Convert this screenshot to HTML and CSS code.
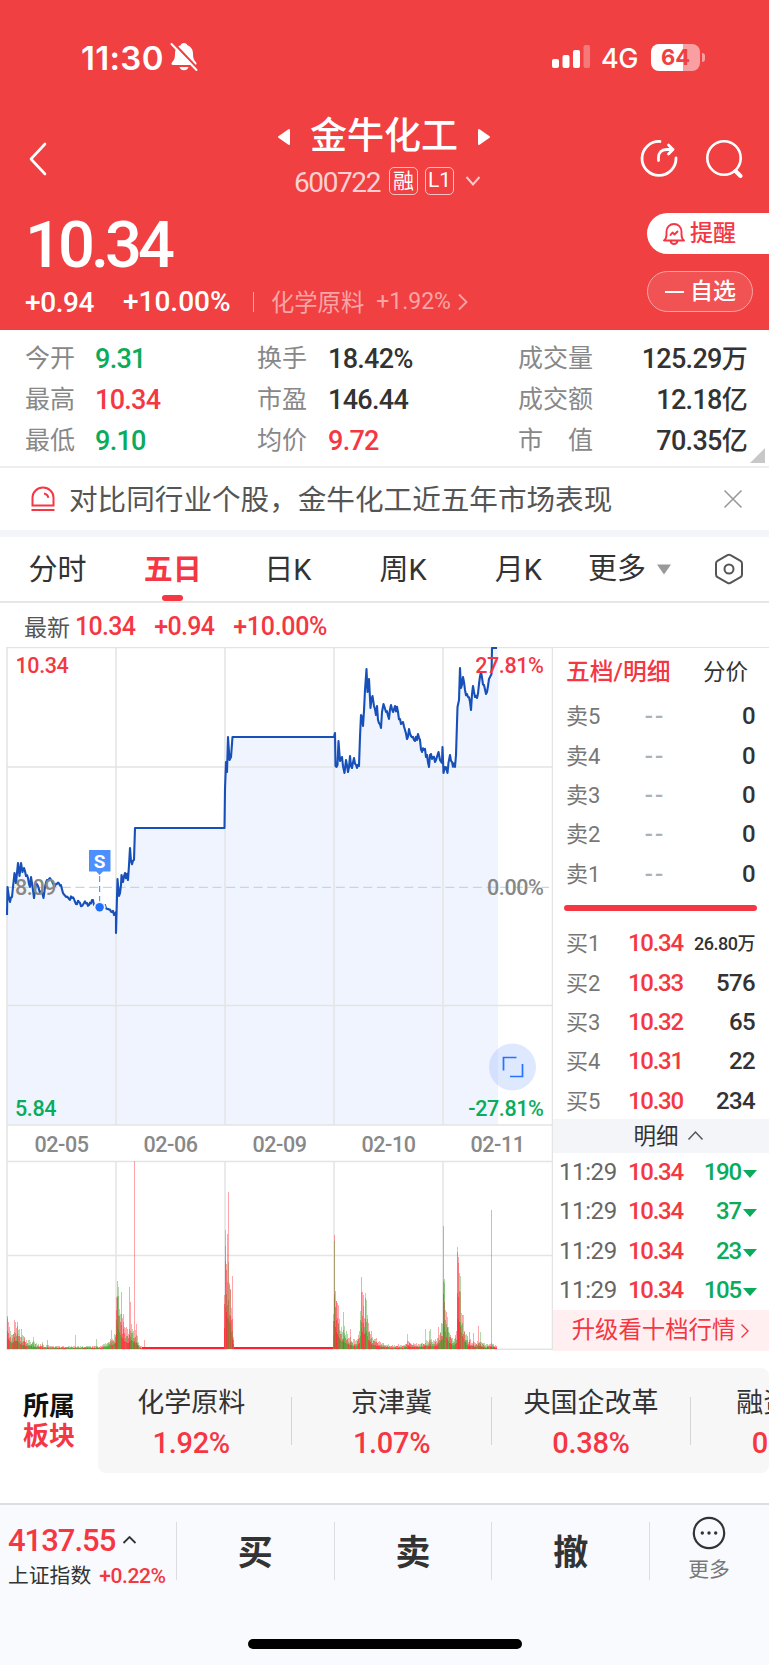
FILE: index.html
```html
<!DOCTYPE html>
<html lang="zh-CN">
<head>
    <meta charset="UTF-8">
    <meta name="viewport" content="width=device-width, initial-scale=1.0">
    <title>金牛化工 600722</title>
    <link rel="stylesheet" href="styles.css">
</head>
<body>
    <header class="header">
        <div class="status-bar">
            <span class="clock">11:30</span>
            <svg class="mute" width="28" height="30" viewBox="0 0 28 30">
                <path d="M14 1c-2 0-3 1-3.300 2.200C7 4.500 5 7.600 5 11.500c0 5-1 6.500-3 8.800C1 21.700 1.500 23 3 23h22c1.500 0 2-1.300 1-2.700-2-2.300-3-3.800-3-8.800 0-3.900-2-7-5.700-8.300C17 2 16 1 14 1z" fill="#fff"/>
                <path d="M9.500 25h9c-.5 2-2.300 3.300-4.500 3.300S10 27 9.500 25z" fill="#fff"/>
                <path d="M3.500 1l25 26.500" stroke="#f04042" stroke-width="2.500"/>
                <path d="M1.500 2l25 26" stroke="#fff" stroke-width="2" stroke-linecap="round"/>
            </svg>
            <svg class="signal" width="40" height="24" viewBox="0 0 40 24" fill="#fff">
                <rect x="0" y="14" width="7" height="9" rx="2"/>
                <rect x="10.500" y="10" width="7" height="13" rx="2"/>
                <rect x="21" y="5" width="7" height="18" rx="2"/>
                <rect x="31.500" y="0" width="6.500" height="23" rx="2" opacity=".3"/>
            </svg>
            <span class="network">4G</span>
            <span class="battery">64</span>
            <span class="battery-tip"></span>
        </div>

        <div class="nav">
            <svg class="back" width="20" height="34" viewBox="0 0 20 34"><path d="M17 2L3 17l14 15" fill="none" stroke="#fff" stroke-width="2.600" stroke-linecap="round" stroke-linejoin="round"/></svg>
            <div class="title">
                <div class="name-row">
                    <svg width="14" height="18" viewBox="0 0 14 18"><path d="M12 2v14L2 9z" fill="#fff" stroke="#fff" stroke-width="2" stroke-linejoin="round"/></svg>
                    <h1>金牛化工</h1>
                    <svg width="14" height="18" viewBox="0 0 14 18"><path d="M2 2v14l10-7z" fill="#fff" stroke="#fff" stroke-width="2" stroke-linejoin="round"/></svg>
                </div>
                <div class="code-row">
                    <span class="code">600722</span>
                    <span class="tag">融</span>
                    <span class="tag tag-level">L1</span>
                    <svg width="16" height="12" viewBox="0 0 16 12"><path d="M1.500 2L8 9.500 14.500 2" fill="none" stroke="#fbc9ca" stroke-width="2"/></svg>
                </div>
            </div>
            <div class="nav-icons">
                <svg width="40" height="40" viewBox="0 0 40 40" fill="none" stroke="#fff" stroke-width="2.800" stroke-linecap="round" stroke-linejoin="round">
                    <path d="M21 3.500A17 17 0 1 0 37 20"/>
                    <path d="M19.500 22.500v-3c0-5 3-8 8-8H34M29.500 7l4.500 4.500-4.500 4.500"/>
                </svg>
                <svg width="40" height="40" viewBox="0 0 40 40" fill="none" stroke="#fff" stroke-width="2.600" stroke-linecap="round">
                    <circle cx="19" cy="20" r="16.700"/>
                    <path d="M30.500 33l5 5" stroke-width="4"/>
                </svg>
            </div>
        </div>

        <div class="quote">
            <div class="quote-main">
                <div class="price">10.34</div>
                <div class="change-row">
                    <span class="change">+0.94</span>
                    <span class="change percent">+10.00%</span>
                    <span class="industry">化学原料</span>
                    <span class="industry-change">+1.92%</span>
                    <svg width="12" height="18" viewBox="0 0 12 18"><path d="M2 1.500L9.500 9 2 16.500" fill="none" stroke="#f9a5a6" stroke-width="1.800"/></svg>
                </div>
            </div>
            <div class="quote-buttons">
                <div class="alert-btn">
                    <svg width="24" height="24" viewBox="0 0 24 24" fill="none" stroke="#f53743" stroke-width="1.900" stroke-linecap="round" stroke-linejoin="round">
                        <path d="M2 18.500h20c-2-1.500-2.500-3-2.500-6V9.500a7.500 7.500 0 0 0-15 0v3c0 3-.5 4.500-2.500 6zM8.500 19c.5 2.500 1.500 3 3.500 3s3-.5 3.500-3"/>
                        <path d="M8.500 13l2-2.500 2 2 3-3"/>
                    </svg>
                    <span>提醒</span>
                </div>
                <div class="watch-btn"><i></i><span>自选</span></div>
            </div>
        </div>
    </header>

    <section class="stats">
        <span>今开</span><b class="green">9.31</b><span>换手</span><b>18.42%</b><span>成交量</span><b class="right">125.29<em>万</em></b>
        <span>最高</span><b class="red">10.34</b><span>市盈</span><b>146.44</b><span>成交额</span><b class="right">12.18<em>亿</em></b>
        <span>最低</span><b class="green">9.10</b><span>均价</span><b class="red">9.72</b><span>市　值</span><b class="right">70.35<em>亿</em></b>
        <i class="corner"></i>
    </section>

    <section class="notice">
        <svg width="26" height="26" viewBox="0 0 26 26" fill="none" stroke="#f53743" stroke-width="2">
            <path d="M2.500 19.500V11.500a10.500 10 0 0 1 21 0v8zM1.500 24h23M14 7.500c2.500.5 4 2 4.300 4.300"/>
        </svg>
        <p>对比同行业个股，金牛化工近五年市场表现</p>
        <svg width="20" height="20" viewBox="0 0 20 20"><path d="M1.500 1.500l17 17M18.500 1.500l-17 17" stroke="#999" stroke-width="1.600"/></svg>
    </section>

    <nav class="tabs">
        <span>分时</span>
        <span class="active">五日</span>
        <span>日K</span>
        <span>周K</span>
        <span>月K</span>
        <span class="more">更多<svg width="16" height="11" viewBox="0 0 16 11"><path d="M1 .5h14L8 10.500z" fill="#999"/></svg></span>
        <svg class="setting" width="30" height="32" viewBox="0 0 30 32" fill="none" stroke="#555" stroke-width="2">
            <path d="M13.500 2.200q1.500-.8 3 0l10 5.600q1.500.8 1.500 2.600v11.200q0 1.800-1.500 2.600l-10 5.600q-1.500.8-3 0l-10-5.600Q2 23.400 2 21.600V10.400q0-1.800 1.500-2.600z"/>
            <circle cx="15" cy="16" r="4.500"/>
        </svg>
    </nav>

    <div class="latest">
        <span>最新</span><b>10.34</b><b>+0.94</b><b>+10.00%</b>
    </div>

    <main class="market">
        <svg class="chart" width="553" height="703" viewBox="0 647 553 703">
            <path id="area" fill="#eff4fe"/>
            <g stroke="#e4e4e4" stroke-width="1.500" fill="none">
                <path d="M7 647.500H553M7 767H553M7 1005.500H553M7 1125H553M7 1161.500H553M7 1255.500H553M7 1349.300H553"/>
                <path d="M7 647V1350M116 647V1125M225 647V1125M334 647V1125M443 647V1125M552.500 647V1350"/>
                <path d="M116 1161V1350M225 1161V1350M334 1161V1350M443 1161V1350"/>
            </g>
            <path d="M7 887.300H549" stroke="#c6d5e2" stroke-width="1.200" stroke-dasharray="9 4.700"/>
            <path id="line" fill="none" stroke="#1650b8" stroke-width="2.100" stroke-linejoin="round"/>
            <g id="volume" shape-rendering="crispEdges"></g>
            <path d="M99.600 876V903" stroke="#5b97ff" stroke-dasharray="6 4" stroke-width="1.200"/>
            <path d="M89 850h21.500v21.500H103l-3.400 3.500-3.400-3.500H89z" fill="#4d8fff"/>
            <circle cx="99.600" cy="907.300" r="6" fill="#eff4fe"/>
            <circle cx="99.600" cy="907.300" r="4.200" fill="#2070ff"/>
            <text class="sell-mark" x="99.700" y="868">S</text>
            <g class="axis">
                <text x="15.500" y="672.500" fill="#f53743">10.34</text>
                <text x="15" y="894.500">8.09</text>
                <text x="15" y="1116" fill="#0aab5a">5.84</text>
                <g text-anchor="end">
                    <text x="543.500" y="672.500" fill="#f53743">27.81%</text>
                    <text x="543.500" y="894.500">0.00%</text>
                    <text x="543.500" y="1116" fill="#0aab5a">-27.81%</text>
                </g>
                <g text-anchor="middle">
                    <text x="61.500" y="1152">02-05</text>
                    <text x="170.500" y="1152">02-06</text>
                    <text x="279.500" y="1152">02-09</text>
                    <text x="388.500" y="1152">02-10</text>
                    <text x="497.500" y="1152">02-11</text>
                </g>
            </g>
            <circle cx="512.500" cy="1067" r="23.500" fill="#acc6ff" opacity=".4"/>
            <path d="M503.500 1070.500V1057.500H516.500M510 1076.500H522.500V1064" fill="none" stroke="#2474ff" stroke-width="1.700"/>
        </svg>

        <aside class="depth">
            <div class="depth-tabs"><b>五档/明细</b><span>分价</span></div>
            <div class="row"><span>卖5</span><i>--</i><b>0</b></div>
            <div class="row"><span>卖4</span><i>--</i><b>0</b></div>
            <div class="row"><span>卖3</span><i>--</i><b>0</b></div>
            <div class="row"><span>卖2</span><i>--</i><b>0</b></div>
            <div class="row"><span>卖1</span><i>--</i><b>0</b></div>
            <div class="ratio"></div>
            <div class="row"><span>买1</span><em>10.34</em><b class="small">26.80万</b></div>
            <div class="row"><span>买2</span><em>10.33</em><b>576</b></div>
            <div class="row"><span>买3</span><em>10.32</em><b>65</b></div>
            <div class="row"><span>买4</span><em>10.31</em><b>22</b></div>
            <div class="row"><span>买5</span><em>10.30</em><b>234</b></div>
            <div class="detail-bar">明细<svg width="17" height="11" viewBox="0 0 17 11"><path d="M1.500 9.500l7-7.500 7 7.500" fill="none" stroke="#555" stroke-width="1.500"/></svg></div>
            <div class="row tick"><span>11:29</span><em>10.34</em><b>190<i></i></b></div>
            <div class="row tick"><span>11:29</span><em>10.34</em><b>37<i></i></b></div>
            <div class="row tick"><span>11:29</span><em>10.34</em><b>23<i></i></b></div>
            <div class="row tick"><span>11:29</span><em>10.34</em><b>105<i></i></b></div>
            <div class="upgrade">升级看十档行情<svg width="10" height="16" viewBox="0 0 10 16"><path d="M1.500 1.500L8 8l-6.500 6.500" fill="none" stroke="#f53743" stroke-width="1.400"/></svg></div>
        </aside>
    </main>

    <section class="sectors">
        <div class="sectors-title">所属<em>板块</em></div>
        <div class="sectors-list">
            <div class="sector"><span>化学原料</span><b>1.92%</b></div>
            <div class="sector"><span>京津冀</span><b>1.07%</b></div>
            <div class="sector"><span>央国企改革</span><b>0.38%</b></div>
            <div class="sector"><span>融资融券</span><b>0.22%</b></div>
        </div>
    </section>

    <footer class="footer">
        <div class="toolbar">
            <div class="index">
                <div class="index-value">4137.55<svg width="15" height="9" viewBox="0 0 15 9"><path d="M1.500 8l6-6 6 6" fill="none" stroke="#333" stroke-width="1.800"/></svg></div>
                <div class="index-name">上证指数<b>+0.22%</b></div>
            </div>
            <div class="action">买</div>
            <div class="action">卖</div>
            <div class="action">撤</div>
            <div class="action-more">
                <svg width="34" height="34" viewBox="0 0 34 34"><circle cx="17" cy="17" r="15.200" fill="none" stroke="#333" stroke-width="2.200"/><g fill="#333"><circle cx="10.300" cy="17" r="1.700"/><circle cx="17" cy="17" r="1.700"/><circle cx="23.700" cy="17" r="1.700"/></g></svg>
                <span>更多</span>
            </div>
        </div>
        <div class="home-bar"></div>
    </footer>

    <script>
        // small fixed-seed generator so the chart looks the same on every load
        let seed = 11;
        function rand() {
            seed = (seed * 16807) % 2147483647;
            return seed / 2147483647;
        }

        const price = [
            [7,915],[7.5,887],[9,898],[10,902],[12,897],[13,887],[14.5,873],[16,883],[18,863],[19.5,876],[21,863],[22.5,872],[24,868],[26,876],[28,878],[30,887],[31,877],[33,890],[34,898],[36,883],[38,886],[40,893],[42,892],[43.5,898],[45,887],[47,880],[49,879],[51,880],[54,885],[57,884],[61,885],[63,893],[66,897],[69,899],[72,898],[74,899],[76,904],[79,902],[82,906],[84,903],[87,903],[89,905],[92,900],[95,906],[98,907],[102,907],[105,905],[108,909],[112,912],[115,914],[116,912],
            [116,933],[117.5,879],[119,896],[121,885],[121.5,875],[123,882],[125,873],[128,880],[130,848],[131,861],[134,860],[135,828],[224.5,828],
            [225,789],[226,762],[227,772],[228,737],[229.5,760],[231,757],[232.5,737],[334,737],
            [335,733],[335.5,766],[337.5,765],[338.5,741],[340,761],[342,757],[344.5,773],[346,760],[348,772],[350,756],[352,768],[354,758],[357,768],[359,766],[361,715],[363,726],[365,690],[366,676],[366.5,669],[367.5,692],[369,679],[370.5,708],[372.5,696],[374,706],[376,715],[377,706],[378,720],[381,728],[382,712],[383.5,704],[386,712],[389,719],[391,705],[393,712],[395,706],[398,712],[400,719],[403,722],[405,730],[407,739],[409,729],[411,736],[415,741],[418,734],[420,740],[422,752],[424,750],[427,755],[429,767],[430,755],[433,757],[436,760],[438.5,752],[440,760],[442,763],[442.5,747],
            [443.5,773],[445,767],[447.5,773],[450,755],[452,762],[455,767],[456,755],[457.5,707],[459,700],[460,668],[461,688],[463,677],[465,690],[468,697],[471,710],[473,686],[475,697],[477,698],[479,684],[481,672],[484,685],[486,694],[488,686],[490,677],[491.5,674],[492,648],[497,648]
        ];
        let d = "M" + price[0];
        for (let i = 1; i < price.length; i++) {
            const [x0, y0] = price[i - 1];
            const [x1, y1] = price[i];
            const flat = x1 - x0 > 20 || x0 > 491;
            if (!flat) {
                const swing = x0 < 116 ? 4 : 8;
                for (let x = x0 + 1; x < x1 - 0.5; x++) {
                    const y = y0 + (y1 - y0) * (x - x0) / (x1 - x0) + (rand() - 0.5) * swing;
                    d += " L" + x + "," + y.toFixed(1);
                }
            }
            d += " L" + x1 + "," + y1;
        }
        document.getElementById("line").setAttribute("d", d);
        document.getElementById("area").setAttribute("d", d + " L498,648 L498,1125 L7,1125 Z");

        // volume: outline of the bar heights per session, x -> height
        const outline = [
            [7,30],[8,24],[11,14],[15,21],[18,18],[20,12],[24,9],[30,7],[36,5],[44,3],[60,2.5],[100,2.5],[107,6],[115,14],
            [117,60],[120,34],[125,18],[128,14],[131,22],[134,14],[136,14],[139,4],[142,2],[223,2],
            [225,105],[227,80],[230,62],[232,24],[234,2],[332,2],[334,70],[336,42],[340,22],[345,16],[350,10],[355,7],[359,14],[361,52],[363,34],[366,44],[368,22],[372,11],[380,6],[390,3.500],[403,3.500],[408,7],[415,4],[430,8],[437,9],[442,26],
            [443,68],[446,30],[449,16],[453,8],[456,16],[457,78],[459,68],[461,40],[464,20],[468,8],[475,6],[480,7],[485,3.500],[490,5],[494,4],[497,2]
        ];
        const peaks = [
            [7,33,"r"],[14,29,"r"],[17,27,"r"],[21,20,"r"],[24,12,"r"],[33,12,"g"],[42,7,"g"],[47,9,"r"],[75,14,"g"],[96,10,"g"],[111,19,"g"],
            [116,52,"r"],[117,68,"r"],[118,53,"g"],[121,57,"r"],[123,35,"r"],[129,62,"r"],[130,47,"r"],[134,188,"r"],[136,25,"r"],[144,9,"r"],
            [225,119,"g"],[226,85,"r"],[227,115,"r"],[228,157,"r"],[229,66,"g"],[230,60,"r"],[232,73,"r"],
            [334,114,"r"],[334,108,"g"],[336,48,"r"],[338,44,"r"],[343,37,"r"],[344,23,"g"],[350,20,"r"],[361,72,"r"],[363,54,"r"],[365,56,"g"],
            [407,15,"g"],[425,20,"g"],[429,18,"g"],[430,20,"g"],[438,22,"r"],[443,123,"r"],[444,66,"g"],[447,32,"g"],
            [457,97,"r"],[458,92,"r"],[460,73,"g"],[469,17,"r"],[473,16,"r"],[478,23,"r"],[480,17,"g"],[491,139,"r"]
        ];
        const colors = { r: "#ff202c", g: "#3fa029" };
        let bars = "";
        function bar(x, h, color, opacity) {
            bars += `<rect x="${x}" y="${(1349 - h).toFixed(1)}" width="1" height="${h.toFixed(1)}" fill="${colors[color]}" opacity="${opacity}"/>`;
        }
        for (let i = 1; i < outline.length; i++) {
            const [x0, h0] = outline[i - 1];
            const [x1, h1] = outline[i];
            for (let x = x0; x < x1; x++) {
                const h = h0 + (h1 - h0) * (x - x0) / (x1 - x0);
                const limitUp = h <= 2;
                if (limitUp) {
                    bar(x, 2, "r", 1);
                    continue;
                }
                const side = rand() < 0.5 ? "r" : "g";
                bar(x, Math.max(1, h * (0.75 + rand() * 0.6)), side, 0.4);
                bar(x, Math.max(1, h * (0.5 + rand() * 0.4)), rand() < 0.5 ? "r" : "g", 0.5);
                bar(x, Math.max(1, h * 0.4), side, 0.6);
            }
        }
        peaks.forEach(p => bar(p[0], p[1], p[2], 0.4));
        document.getElementById("volume").innerHTML = bars;
    </script>
</body>
</html>
```

FILE: styles.css
```css
* {
    box-sizing: border-box;
}
body {
    margin: 0;
    width: 769px;
    height: 1665px;
    overflow: hidden;
    background: #fff;
    color: #333;
    font-family: Roboto, "Noto Sans CJK SC", sans-serif;
}
svg {
    display: block;
    flex: none;
}
b, em, i {
    font-style: normal;
    font-weight: 500;
}
.red {
    color: #f53743;
}
.green {
    color: #0aab5a;
}

/* header */
.header {
    height: 330px;
    background: #f04042;
    color: #fff;
}
.status-bar {
    height: 100px;
    padding: 14px 64px 0 81px;
    display: flex;
    align-items: center;
}
.clock {
    width: 89px;
    padding-top: 1px;
    font: 600 33px Inter, sans-serif;
    letter-spacing: 0.3px;
}
.signal {
    margin-left: auto;
}
.network {
    width: 50px;
    margin: 2px 0 0 9px;
    font: 500 27px Inter, sans-serif;
    letter-spacing: -0.5px;
}
.battery {
    width: 49px;
    height: 27px;
    border-radius: 8px;
    background: linear-gradient(90deg, #fff 65%, #f8a0a1 65%);
    color: #f04042;
    font: 700 22px/27px Inter, sans-serif;
    text-align: center;
}
.battery-tip {
    width: 3px;
    height: 9px;
    margin: 0 0 0 2px;
    border-radius: 0 3px 3px 0;
    background: #f8a0a1;
}
.nav {
    height: 110px;
    padding: 0 24px 0 28px;
    display: flex;
}
.back {
    margin-top: 42px;
}
.title {
    width: 230px;
    margin: 10px auto 0 221px;
}
.name-row {
    height: 54px;
    display: flex;
    justify-content: center;
    align-items: center;
    gap: 19px;
}
.name-row h1 {
    margin: 0;
    font-size: 37px;
    font-weight: 500;
    line-height: 54px;
}
.code-row {
    height: 34px;
    padding-left: 25px;
    display: flex;
    align-items: center;
    gap: 7px;
}
.code {
    width: 88px;
    padding-top: 2px;
    font-size: 28px;
    letter-spacing: -1.4px;
    color: #fbd0d1;
}
.tag {
    width: 29px;
    height: 28px;
    border: 1.5px solid #fbc0c1;
    border-radius: 5px;
    font-size: 21px;
    line-height: 26px;
    text-align: center;
}
.tag-level {
    line-height: 25px;
}
.code-row svg {
    margin-left: 4px;
}
.nav-icons {
    display: flex;
    gap: 26px;
    margin-top: 38px;
}
.quote {
    display: flex;
    justify-content: space-between;
}
.quote-main {
    padding-left: 25px;
}
.price {
    height: 72px;
    font-size: 65px;
    font-weight: 500;
    line-height: 71px;
    letter-spacing: -4px;
}
.change-row {
    height: 40px;
    display: flex;
    align-items: center;
}
.change {
    width: 98px;
    font-size: 28px;
    font-weight: 500;
    letter-spacing: -0.4px;
    white-space: nowrap;
}
.percent {
    width: 131px;
    height: 20px;
    line-height: 20px;
    letter-spacing: 0;
    border-right: 1px solid #f9a5a6;
}
.industry {
    margin: -3px 0 0 17px;
    font-size: 23.3px;
    color: #f9a5a6;
}
.industry-change {
    margin: -1px 6px 0 12px;
    font-size: 23px;
    color: #f9a5a6;
}
.quote-buttons {
    width: 122px;
    padding-top: 3px;
    font-size: 23px;
    font-weight: 500;
    line-height: 43px;
}
.alert-btn, .watch-btn {
    display: flex;
    align-items: center;
    height: 41px;
}
.alert-btn {
    gap: 4px;
    padding-left: 15px;
    border-radius: 21px 0 0 21px;
    background: #fff;
    color: #f53743;
}
.watch-btn {
    gap: 6px;
    width: 106px;
    margin-top: 17px;
    padding-left: 17px;
    border: 1.5px solid #f9a5a6;
    border-radius: 21px;
    background: #f15254;
}
.watch-btn i {
    width: 19px;
    height: 2px;
    background: #fff;
}

/* stats */
.stats {
    position: relative;
    height: 138px;
    padding: 9px 22px 0 25px;
    display: grid;
    grid-template-columns: 70px 162px 71px 190px 90px 1fr;
    grid-auto-rows: 41px;
    align-items: center;
    border-bottom: 2px solid #eee;
    font-size: 25px;
    line-height: 41px;
    white-space: nowrap;
}
.stats span {
    margin-top: -3px;
    color: #888;
}
.stats b {
    font-size: 27px;
    letter-spacing: -0.7px;
}
.stats em {
    font-size: 26px;
}
.right {
    text-align: right;
}
.corner {
    position: absolute;
    right: 4px;
    bottom: 3px;
    border-left: 15px solid transparent;
    border-bottom: 15px solid #c8c8c8;
}
.notice {
    height: 69px;
    padding: 0 26px 0 30px;
    display: flex;
    align-items: center;
    border-bottom: 7px solid #f3f5fb;
}
.notice p {
    flex: 1;
    margin: 3px 0 0 13px;
    font-size: 28.6px;
    line-height: 59px;
    color: #555;
}

/* chart tabs */
.tabs {
    height: 66px;
    display: grid;
    grid-template-columns: repeat(5, 115.2px) 136px 1fr;
    align-items: center;
    border-bottom: 2px solid #e6e6e6;
    font-size: 29px;
    line-height: 67px;
    text-align: center;
}
.tabs span {
    height: 64px;
}
.tabs .active {
    position: relative;
    color: #f53743;
    font-weight: 700;
}
.active::after {
    content: "";
    position: absolute;
    left: 47px;
    bottom: 0;
    width: 21px;
    height: 6px;
    border-radius: 3px;
    background: #f53743;
}
.tabs .more {
    display: flex;
    align-items: center;
    gap: 10px;
    padding-left: 12px;
}
.setting {
    margin-left: 2px;
}
.latest {
    height: 44px;
    padding: 2px 0 0 24px;
    display: flex;
    align-items: center;
    font-size: 23px;
    color: #555;
}
.latest b {
    margin: 1px 19px 0 0;
    font-size: 25px;
    letter-spacing: -0.7px;
    color: #f53743;
}
.latest b:last-child {
    letter-spacing: -0.3px;
}
.latest span {
    margin-right: 5px;
}

/* chart and order book */
.market {
    display: flex;
    height: 703px;
}
.axis {
    font-size: 21.5px;
    font-weight: 500;
    letter-spacing: -0.4px;
    fill: #888;
}
.sell-mark {
    font: 700 19px Roboto, sans-serif;
    fill: #fff;
    text-anchor: middle;
}
.depth {
    width: 216px;
    border-top: 1px solid #e4e4e4;
}
.depth-tabs {
    height: 49px;
    padding: 0 21px 0 13px;
    display: flex;
    justify-content: space-between;
    font-size: 23.8px;
    line-height: 48px;
}
.depth-tabs b {
    color: #f53743;
}
.depth-tabs span {
    font-size: 22.5px;
}
.row {
    height: 39.4px;
    padding: 0 14px 0 13px;
    display: grid;
    grid-template-columns: 62px 54px 1fr;
    align-items: center;
    line-height: 39px;
    font-size: 24px;
    letter-spacing: -0.6px;
    white-space: nowrap;
}
.row span {
    font-size: 22px;
    letter-spacing: 0;
    color: #777;
}
.row > i {
    text-align: center;
    letter-spacing: 2px;
    color: #a9b1bb;
}
.row em {
    color: #f53743;
    letter-spacing: -1.3px;
}
.row b {
    text-align: right;
}
.row .small {
    font-size: 18px;
    letter-spacing: -0.5px;
}
.ratio {
    height: 6px;
    margin: 11px 12px 13px 11px;
    border-radius: 3px;
    background: #f53743;
}
.detail-bar {
    height: 34px;
    margin-top: -2px;
    padding-left: 15px;
    display: flex;
    justify-content: center;
    align-items: center;
    gap: 8px;
    background: #f3f5f9;
    font-size: 22.5px;
    line-height: 34px;
}
.tick {
    padding: 0 12px 0 6px;
    grid-template-columns: 69px 52px 1fr;
}
.tick span {
    font-size: 24px;
    letter-spacing: -0.4px;
    color: #666;
}
.tick b {
    display: flex;
    justify-content: flex-end;
    align-items: center;
    letter-spacing: -1.2px;
    color: #0aab5a;
}
.tick b i {
    margin: 3px 0 0 2px;
    border: 7px solid transparent;
    border-top: 8px solid #0aab5a;
    border-bottom: 0;
}
.upgrade {
    height: 41px;
    display: flex;
    justify-content: center;
    align-items: center;
    gap: 5px;
    background: #ffeff0;
    color: #f53743;
    font-size: 23.4px;
    line-height: 41px;
}

/* sectors */
.sectors {
    display: flex;
    height: 153px;
    padding-top: 18px;
}
.sectors-title {
    width: 98px;
    padding: 23px 0 0 23px;
    font-size: 26px;
    font-weight: 700;
    line-height: 30px;
    color: #111;
}
.sectors-title em {
    display: block;
    font-weight: 700;
    color: #f53743;
}
.sectors-list {
    width: 671px;
    height: 105px;
    display: flex;
    align-items: center;
    border-radius: 8px;
    background: #f7f7f7;
    overflow: hidden;
}
.sector {
    flex: none;
    width: 199.4px;
    height: 48px;
    padding-top: 5px;
    display: flex;
    flex-direction: column;
    justify-content: center;
    align-items: center;
    border-right: 1.5px solid #d5d5d5;
    font-size: 27px;
    line-height: 40px;
}
.sector:first-child {
    width: 194.4px;
    padding-right: 7px;
}
.sector b {
    color: #f53743;
    font-size: 29px;
    letter-spacing: -0.3px;
}

/* footer */
.footer {
    height: 162px;
    border-top: 2px solid #dcdde0;
    background: #f9fafd;
}
.toolbar {
    display: flex;
    height: 134px;
    padding-top: 17px;
}
.index {
    width: 176px;
    padding-left: 8px;
    white-space: nowrap;
}
.index-value {
    display: flex;
    align-items: center;
    gap: 7px;
    font-size: 31px;
    font-weight: 500;
    line-height: 38px;
    letter-spacing: -1px;
    color: #f53743;
}
.index-value svg {
    margin-top: -4px;
}
.index-name {
    font-size: 20.8px;
    line-height: 33px;
}
.index-name b {
    margin-left: 8px;
    font-size: 21px;
    letter-spacing: -0.4px;
    color: #f53743;
}
.action {
    width: 157.7px;
    height: 58px;
    border-left: 1.5px solid #dcdde0;
    font-size: 35px;
    font-weight: 700;
    line-height: 63px;
    text-align: center;
}
.action-more {
    width: 119px;
    height: 58px;
    margin-top: 0;
    display: flex;
    flex-direction: column;
    align-items: center;
    border-left: 1.5px solid #dcdde0;
    font-size: 20.8px;
    line-height: 40px;
    color: #777;
}
.action-more svg {
    margin-top: -6px;
}
.home-bar {
    width: 274px;
    height: 10px;
    margin: 0 auto;
    border-radius: 5px;
    background: #000;
}
```
